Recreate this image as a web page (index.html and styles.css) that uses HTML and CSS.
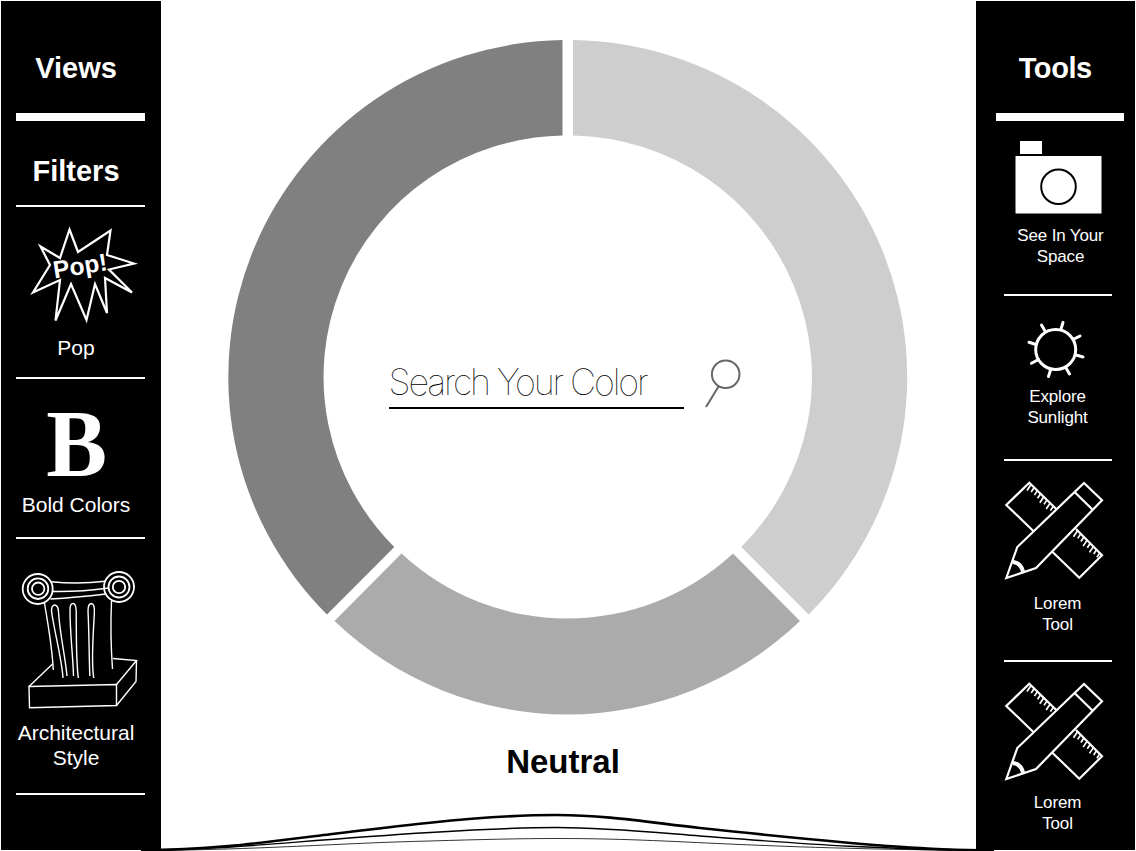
FILE: index.html
```html
<!DOCTYPE html>
<html lang="en">

<head>
  <meta charset="UTF-8" />
  <meta name="viewport" content="width=device-width, initial-scale=1.0" />
  <title>Color Search</title>
  <link rel="stylesheet" href="styles.css">
</head>

<body>
  <!-- shared icon -->
  <svg class="hide">
    <symbol id="pencil-ruler" viewBox="1003 479 102 102">
      <path d="M1033.3 531 L1006.3 505 L1029.3 482.7 L1056 508.7" />
      <path d="M1052.3 551.7 L1079.3 577.7 L1102 555.3 L1076 529" />
      <path d="M1006.3 578 L1017.3 547 L1084 483 L1102 500.3 L1036 568 Z" />
      <path d="M1074 491.5 L1092.7 509.7" />
      <path class="ticks" d="M1031 484.5 l-4 6 M1034.2 487.5 l-3 4.5 M1037.4 490.6 l-3 4.5 M1040.6 493.7 l-3 4.5 M1043.8 496.8 l-4 6 M1047 499.9 l-3 4.5 M1050.2 503 l-4 6 M1053.4 506.1 l-3 4.5" />
      <path class="ticks" d="M1077.5 530.8 l-4 6 M1080.7 533.9 l-3 4.5 M1083.9 537 l-3 4.5 M1087.1 540.1 l-4 6 M1090.3 543.2 l-3 4.5 M1093.5 546.4 l-4 6 M1096.7 549.5 l-3 4.5 M1099.9 552.7 l-3 4.5" />
      <path class="lead" d="M1013 562 Q1021 563 1023 571.5" />
    </symbol>
  </svg>

  <div class="app">
    <nav class="sidebar views">
      <h2 class="title">Views</h2>
      <h2 class="title filters">Filters</h2>

      <a class="item pop">
        <svg class="icon" width="110" height="100" viewBox="29 225 110 100">
          <path d="M69.5 229.5 L78 252 L110.5 230.5 L107 255 L134 263.5 L109 269.5 L132 292.5 L105 278 L107 313 L95 284 L86.5 320 L71 284 L55.5 320.5 L60 280 L33 292.5 L50 265 L40.5 246.5 L60 258 Z" />
          <text x="54.5" y="278.5" transform="rotate(-9 54.5 278.5)">Pop!</text>
        </svg>
        <span class="label">Pop</span>
      </a>

      <a class="item bold">
        <span class="letter">B</span>
        <span class="label">Bold Colors</span>
      </a>

      <a class="item arch">
        <svg class="icon thin" width="118" height="142" viewBox="20 569 118 142">
          <g>
            <circle cx="37.7" cy="589" r="15" />
            <circle cx="38" cy="588.7" r="10.3" />
            <circle cx="38.2" cy="588.7" r="6.2" />
            <circle cx="119" cy="587" r="15" />
            <circle cx="119" cy="587" r="10.5" />
            <circle cx="119" cy="587" r="6.2" />
          </g>
          <path d="M51 581.7 Q78 584.5 105.5 581.3" />
          <path d="M53 591.5 Q80 592 109 588" />
          <path d="M50.5 599 Q75 597.5 106 594" />
          <path d="M44.5 603 C48 625 52 645 53.3 670" />
          <path d="M111.5 601 Q110 636 112.5 669" />
          <path d="M63 678 C62 660 54 630 51.5 611 Q51.5 605 55 605 Q58.5 606 58.5 612 C60 635 65 655 67 676" />
          <path d="M73.5 676 C73 655 70 635 70 610 Q70 603.5 73 603.5 Q76 603.5 76.2 611 C76.5 640 76 660 78.3 678" />
          <path d="M89.8 676 C89 650 89 630 88 611 Q88 603.5 91.5 603.5 Q95 604 94.3 614 C93 640 91 660 93.7 678" />
          <path d="M29 686.5 L116.5 684.5 L116.5 705.5 L29.5 707.7 Z" />
          <path d="M29 686.5 L52.5 664 M113 658.5 L136.5 660.5 L116.5 684.5 M136.5 660.5 L136 681.5 L116.5 705.5" />
        </svg>
        <span class="label">Architectural<br>Style</span>
      </a>
    </nav>

    <main class="wheel">
      <svg class="ring" width="680" height="677" viewBox="228 39 680 677">
        <path class="dark" d="M562.5 40 A339.5 337 0 0 0 327 614.5 L394.3 547 A244 241.5 0 0 1 562.5 135.5 Z" />
        <path class="light" d="M573 40 A339.5 337 0 0 1 808.5 614.5 L741.2 547 A244 241.5 0 0 0 573 135.5 Z" />
        <path class="mid" d="M334.5 621 A336.5 336.5 0 0 0 800 621 L733 553.5 A243.5 243.5 0 0 1 401.5 553.5 Z" />
      </svg>

      <form class="search">
        <input type="text" class="search-input" placeholder="Search Your Color" aria-label="Search Your Color" />
        <svg class="search-icon" width="38" height="50" viewBox="704 359 38 50">
          <circle cx="725.7" cy="374.3" r="13.8" />
          <path d="M718.5 386.5 L706 407" />
        </svg>
      </form>

      <h1 class="group-name">Neutral</h1>
    </main>

    <nav class="sidebar tools">
      <h2 class="title">Tools</h2>

      <a class="item camera">
        <svg class="icon solid" width="88" height="74" viewBox="1014 140 88 74">
          <rect x="1020" y="141" width="22" height="13" />
          <rect x="1015.5" y="156" width="86" height="57.5" />
          <circle cx="1058.5" cy="186.7" r="17.3" />
        </svg>
        <span class="label">See In Your<br>Space</span>
      </a>

      <a class="item sun">
        <svg class="icon rays" width="60" height="60" viewBox="1026 320 60 60">
          <circle cx="1055.7" cy="349.5" r="20" />
          <path d="M1045 331 L1041.5 325 M1061 329 L1063 322.5 M1074 339 L1080 336 M1076 355 L1083 357 M1066 368 L1069.5 374 M1050.5 370 L1048.5 376.5 M1038.5 359.5 L1031.5 363.3 M1036 344.5 L1029 342.3" />
        </svg>
        <span class="label">Explore<br>Sunlight</span>
      </a>

      <a class="item lorem">
        <svg class="icon" width="102" height="102"><use href="#pencil-ruler" /></svg>
        <span class="label">Lorem<br>Tool</span>
      </a>

      <a class="item lorem last">
        <svg class="icon" width="102" height="102"><use href="#pencil-ruler" /></svg>
        <span class="label">Lorem<br>Tool</span>
      </a>
    </nav>
  </div>

  <!-- pull-up drawer edge, runs over the foot of both sidebars -->
  <svg class="drawer" width="1136" height="40" viewBox="0 811 1136 40">
    <path stroke-width="2.6" d="M141 850 C210 850 260 843 330 834.3 C364 830 397 826 430 822.7 C480 817.5 520 815 557 815 C605 815 650 822.5 700 828 C780 836.5 850 843.5 900 846.7 C930 849 960 850 994 850.5" />
    <path stroke-width="1.4" d="M141 850.5 C230 850 290 841 430 832.5 C480 829.5 520 827.5 557 827.5 C605 827.5 650 832 700 836 C800 843.5 880 850 994 850.5" />
    <path stroke-width=".8" d="M141 850.5 C260 850 340 843 430 841 C480 839.5 520 838.5 557 838.5 C630 838.5 680 842 740 844.5 C820 848 900 850 994 850.5" />
  </svg>
</body>

</html>
```
FILE: styles.css
```css
* {
  box-sizing: border-box;
  margin: 0;
  padding: 0;
}

body {
  font-family: "Liberation Sans", Arial, sans-serif;
  background-color: #fff;
  height: 851px;
  overflow: hidden;
}

.hide {
  position: absolute;
  width: 0;
  height: 0;
}

.app {
  display: grid;
  grid-template-columns: 160px 1fr 159.5px;
  height: 851px;
  padding: 1px 1px 1.5px;
}

/* Sidebars */
.sidebar {
  display: flex;
  flex-direction: column;
  background-color: #000;
  color: #fff;
}

.views {
  padding: 0 16px 0 15px;
}

.tools {
  padding: 0 11px 0 20px;
}

.title {
  height: 120px;
  padding-top: 50px;
  border-bottom: 8px solid #fff;
  font-size: 29px;
  line-height: 34px;
  text-align: center;
}

.views .title {
  padding-right: 9px;
}

.tools .title {
  padding-right: 9px;
  letter-spacing: -0.4px;
}

.views .filters {
  height: 86px;
  padding-top: 33px;
  border-bottom-width: 2px;
}

.item {
  display: flex;
  flex-direction: column;
  align-items: center;
  justify-content: space-between;
  flex-shrink: 0;
  border-bottom: 2px solid #fff;
}

.label {
  font-size: 21px;
  line-height: 25px;
  text-align: center;
  white-space: nowrap;
}

.views .label {
  margin-right: 9px;
}

.tools .item {
  width: 108px;
  margin-left: 8px;
}

.tools .label {
  font-size: 17px;
  line-height: 21px;
  letter-spacing: -0.15px;
}

.pop {
  height: 172px;
  padding: 18px 0 17px;
}

.pop .icon {
  margin-left: 6px;
}

.bold {
  height: 160px;
  padding: 30px 0 20px;
}

.letter {
  height: 70px;
  margin-right: 8px;
  font-family: "Liberation Serif", "Times New Roman", serif;
  font-size: 95px;
  font-weight: bold;
  line-height: 70px;
  transform: scaleX(0.96);
}

.arch {
  height: 256px;
  padding: 30px 0 23px;
}

.arch .icon {
  margin-right: 3px;
}

.camera {
  height: 175px;
  padding: 19px 0 27px;
}

.camera .label {
  margin-left: 6px;
}

.sun {
  height: 165px;
  padding: 24px 0 31px;
}

.sun .icon {
  margin-right: 4px;
}

.lorem {
  height: 201px;
  padding: 18px 0 25px;
}

.lorem .icon {
  margin-right: 8px;
}

.lorem.last {
  height: 172px;
  padding: 18px 0 0;
  border-bottom: none;
}

/* Icons */
.icon {
  flex-shrink: 0;
  fill: none;
  stroke: #fff;
  stroke-width: 2.2;
}

.icon text {
  fill: #fff;
  stroke: none;
  font-size: 24.5px;
  font-weight: bold;
}

.thin {
  stroke-width: 1.4;
}

.thin g {
  stroke-width: 1.8;
}

.solid rect {
  fill: #fff;
  stroke: none;
}

.solid circle {
  stroke: #000;
  stroke-width: 2;
}

.rays {
  stroke-width: 3;
  stroke-linecap: round;
}

.ticks {
  stroke-width: 1.7;
}

.lead {
  stroke-width: 4;
}

/* Color wheel */
.wheel {
  display: grid;
  grid-template-columns: 67px 680px 1fr;
  grid-template-rows: 38px 677px 1fr;
}

.ring,
.search {
  grid-column: 2;
  grid-row: 2;
}

.dark {
  fill: #808080;
}

.light {
  fill: #cecece;
}

.mid {
  fill: #ababab;
}

.search {
  display: flex;
  gap: 20px;
  padding: 320px 0 0 160.5px;
  align-items: flex-start;
}

.search-input {
  width: 295.5px;
  height: 50px;
  padding-bottom: 3px;
  border: none;
  border-bottom: 2px solid #000;
  background: none;
  color: #000;
  font-family: Inter, "Liberation Sans", sans-serif;
  font-size: 36px;
  font-weight: 100;
  letter-spacing: -2.15px;
  outline: none;
}

.search-input::placeholder {
  color: #000;
  opacity: 1;
}

.search-icon {
  fill: none;
  stroke: #666;
  stroke-width: 2;
}

.group-name {
  grid-column: 2;
  grid-row: 3;
  padding: 27px 10px 0 0;
  font-size: 33px;
  line-height: 38px;
  text-align: center;
}

.drawer {
  position: absolute;
  left: 0;
  bottom: 0;
  fill: none;
  stroke: #000;
}
```
